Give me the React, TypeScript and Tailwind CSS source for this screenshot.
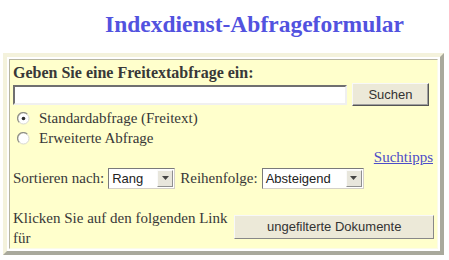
import React from 'react'

function Radio({ checked }: { checked?: boolean }) {
  return (
    <svg width="13" height="13" viewBox="0 0 13 13" className="shrink-0">
      <circle cx="6.5" cy="6.5" r="5.5" fill="#ffffff" stroke="#d8d8d0" strokeWidth="1" />
      <path d="M2.2 10.3 A5.5 5.5 0 0 1 10.3 2.2" fill="none" stroke="#909088" strokeWidth="1.2" />
      {checked && <circle cx="6.5" cy="6.5" r="1.8" fill="#303030" />}
    </svg>
  )
}

function Select({ value, width }: { value: string; width: string }) {
  return (
    <div
      className={`flex items-stretch h-[21px] bg-white border border-t-[#7a7a7a] border-l-[#7a7a7a] border-r-[#d4d0c8] border-b-[#d4d0c8] ${width}`}
    >
      <span className="flex-1 pl-[3px] text-[13px] leading-[19px] text-[#222]" style={{ fontFamily: '"Liberation Sans", Arial, sans-serif' }}>
        {value}
      </span>
      <span className="w-[16px] m-[1px] flex items-center justify-center bg-[#e8e6dc] border border-t-[#fafafa] border-l-[#fafafa] border-r-[#909090] border-b-[#909090]">
        <svg width="7" height="4" viewBox="0 0 7 4">
          <path d="M0 0 H7 L3.5 4 Z" fill="#444" />
        </svg>
      </span>
    </div>
  )
}

export default function App() {
  const sans = { fontFamily: '"Liberation Sans", Arial, sans-serif' }
  return (
    <div className="w-[449px] h-[260px] bg-white overflow-hidden text-[#383838]" style={{ fontFamily: '"Liberation Serif", "Times New Roman", serif' }}>
      <h1 className="pl-[105px] pt-[10px] text-[23.5px] leading-[28px] font-bold text-[#5252df]">
        Indexdienst-Abfrageformular
      </h1>

      <div className="mt-[15px] ml-[3px] w-[441px] border-4 border-t-[#f4f2dc] border-l-[#f4f2dc] border-r-[#a9a99c] border-b-[#a9a99c] p-[2px]">
        <div className="bg-[#ffffcc] border border-t-[#b8b6a0] border-l-[#b8b6a0] border-r-[#fcfce8] border-b-[#fcfce8] px-[3px] pt-[4px] pb-0">
          <div className="text-[16px] leading-[18px] font-bold">Geben Sie eine Freitextabfrage ein:</div>

          <div className="flex items-center gap-[5px] mt-[1px]">
            <div className="w-[334px] h-[20px] bg-white border-2 border-t-[#707070] border-l-[#707070] border-r-[#f0f0f0] border-b-[#f0f0f0]" />
            <button
              type="button"
              className="w-[77px] h-[23px] bg-[#ece9d8] text-[13px] text-[#333] border border-t-[#f8f8f8] border-l-[#f8f8f8] border-r-[#555] border-b-[#555] shadow-[inset_-1px_-1px_0_#a0a0a0]"
              style={sans}
            >
              Suchen
            </button>
          </div>

          <div className="flex items-center gap-[9px] mt-[2px] pl-[4px] text-[15px] leading-[20px]">
            <Radio checked />
            <span>Standardabfrage (Freitext)</span>
          </div>
          <div className="flex items-center gap-[9px] pl-[4px] text-[15px] leading-[20px]">
            <Radio />
            <span>Erweiterte Abfrage</span>
          </div>

          <div className="flex justify-end pr-[1px] text-[15px] leading-[18px]">
            <a href="#" className="underline text-[#4d4dc8]">Suchtipps</a>
          </div>

          <div className="flex items-center gap-[4px] text-[15px] leading-[22px] mt-[1px]">
            <span>Sortieren nach:</span>
            <Select value="Rang" width="w-[67px]" />
            <span className="ml-[1px]">Reihenfolge:</span>
            <Select value="Absteigend" width="w-[102px]" />
          </div>

          <div className="flex items-start mt-[19px]">
            <div className="text-[15px] leading-[20px] w-[220px]">
              Klicken Sie auf den folgenden Link für
            </div>
            <button
              type="button"
              className="ml-[2px] mt-[7px] w-[200px] h-[24px] bg-[#ece9d8] text-[13px] text-[#333] border border-t-[#f8f8f8] border-l-[#f8f8f8] border-r-[#888] border-b-[#888]"
              style={sans}
            >
              ungefilterte Dokumente
            </button>
          </div>
        </div>
      </div>
    </div>
  )
}
